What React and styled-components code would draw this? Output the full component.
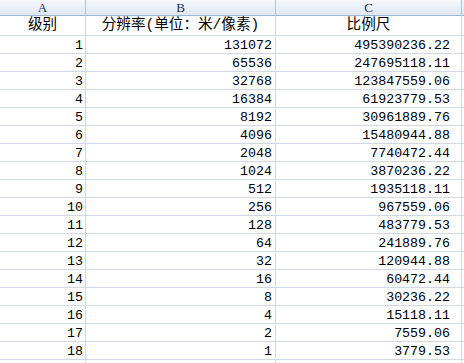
import React from "react";
import styled, { createGlobalStyle } from "styled-components";

const GlobalStyle = createGlobalStyle`
  html, body {
    margin: 0;
    padding: 0;
    background: #ffffff;
    overflow: hidden;
  }
`;

const Sheet = styled.div`
  display: grid;
  grid-template-columns: 86px 190px 186px 1fr;
  grid-template-rows: 16px 20px repeat(19, 18px);
  width: 464px;
  height: 363px;
  overflow: hidden;
`;

const ColHead = styled.div`
  box-sizing: border-box;
  display: flex;
  align-items: flex-end;
  justify-content: center;
  padding-bottom: 1px;
  background: linear-gradient(#f6f9fc, #dde6f2);
  border-right: ${(p) => (p.$last ? "none" : "1px solid #b3c5da")};
  border-bottom: 1px solid #9eb6ce;
  font-family: "Liberation Serif", serif;
  font-size: 13px;
  line-height: 12px;
  color: #1f3350;
`;

const Cell = styled.div`
  box-sizing: border-box;
  display: flex;
  align-items: flex-end;
  justify-content: ${(p) => (p.$center ? "center" : "flex-end")};
  padding: 0 ${(p) => p.$pad || 0}px 1px 0;
  border-right: ${(p) => (p.$last ? "none" : "1px solid #d0d7e5")};
  border-bottom: 1px solid #d0d7e5;
  font-family: "Liberation Mono", monospace;
  font-size: 13.3px;
  line-height: 13px;
  color: #000000;
  white-space: nowrap;
`;

const Label = styled(Cell)`
  font-family: "Liberation Mono", "Noto Sans CJK SC", monospace;
  font-size: 14.6px;
  line-height: 16px;
  padding: 0 0 2px 0;
`;

const scales = [
  "495390236.22",
  "247695118.11",
  "123847559.06",
  "61923779.53",
  "30961889.76",
  "15480944.88",
  "7740472.44",
  "3870236.22",
  "1935118.11",
  "967559.06",
  "483779.53",
  "241889.76",
  "120944.88",
  "60472.44",
  "30236.22",
  "15118.11",
  "7559.06",
  "3779.53",
];

const App = () => {
  return (
    <>
      <GlobalStyle />
      <Sheet>
        <ColHead>A</ColHead>
        <ColHead>B</ColHead>
        <ColHead>C</ColHead>
        <ColHead $last />

        <Label $center>级别</Label>
        <Label $center>分辨率(单位：米/像素)</Label>
        <Label $center>比例尺</Label>
        <Cell $last />

        {scales.map((scale, i) => (
          <React.Fragment key={i}>
            <Cell $pad={2}>{i + 1}</Cell>
            <Cell $pad={3}>{131072 / Math.pow(2, i)}</Cell>
            <Cell $pad={11}>{scale}</Cell>
            <Cell $last />
          </React.Fragment>
        ))}

        <Cell />
        <Cell />
        <Cell />
        <Cell $last />
      </Sheet>
    </>
  );
};

export default App;
